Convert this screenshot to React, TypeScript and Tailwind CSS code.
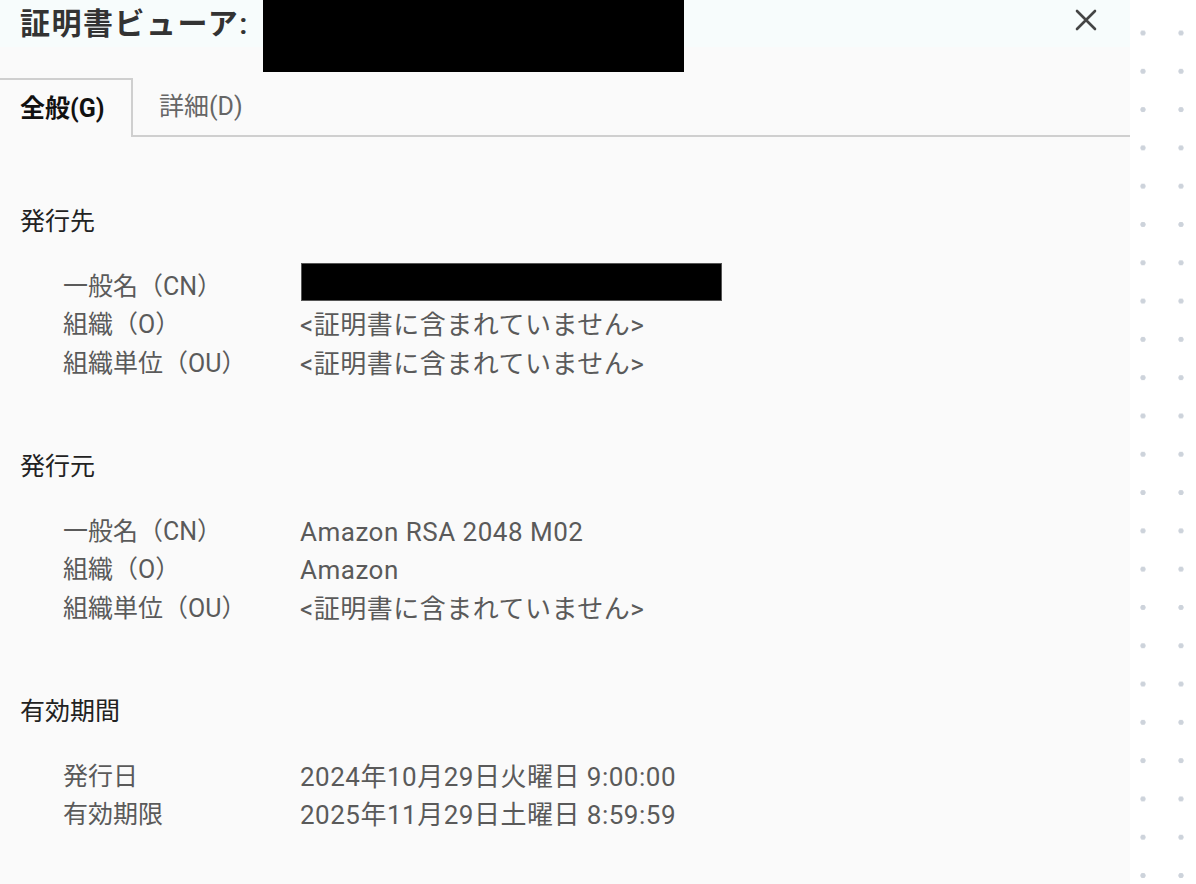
type Row = { label: string; value: string; redacted?: boolean };
type Section = { title: string; rows: Row[] };

const NOT_INCLUDED = '<証明書に含まれていません>';

const sections: Section[] = [
  {
    title: '発行先',
    rows: [
      { label: '一般名（CN）', value: '', redacted: true },
      { label: '組織（O）', value: NOT_INCLUDED },
      { label: '組織単位（OU）', value: NOT_INCLUDED },
    ],
  },
  {
    title: '発行元',
    rows: [
      { label: '一般名（CN）', value: 'Amazon RSA 2048 M02' },
      { label: '組織（O）', value: 'Amazon' },
      { label: '組織単位（OU）', value: NOT_INCLUDED },
    ],
  },
  {
    title: '有効期間',
    rows: [
      { label: '発行日', value: '2024年10月29日火曜日 9:00:00' },
      { label: '有効期限', value: '2025年11月29日土曜日 8:59:59' },
    ],
  },
];

export default function App() {
  return (
    <div className="flex h-[884px] w-[1196px] overflow-hidden bg-white font-['Roboto','Noto_Sans_CJK_JP',sans-serif]">
      {/* Dialog */}
      <div className="relative w-[1130px] shrink-0 bg-[#fafafa]">
        <div className="flex h-[47px] items-center justify-between bg-[#f7fcfc] pl-5 pr-[33px]">
          <h1 className="text-[30px] font-semibold leading-none tracking-[1.5px] text-[#333]">証明書ビューア:</h1>
          <button className="-translate-y-[4px] text-[#454545]">
            <svg width="22" height="22" viewBox="0 0 22 22" fill="none" stroke="currentColor" strokeWidth="2.6" strokeLinecap="round">
              <path d="M2 2 20 20M20 2 2 20" />
            </svg>
          </button>
        </div>

        {/* redacted title */}
        <div className="absolute left-[263px] top-0 h-[72px] w-[421px] bg-black" />

        {/* Tabs */}
        <div className="mt-[31px] flex h-[59px] border-b-2 border-[#cfcfcf]">
          <div className="-mb-[2px] flex h-[59px] w-[133px] items-center border-r-2 border-t-2 border-[#cfcfcf] bg-[#fafafa] pl-5 text-[25px] font-bold text-[#111]">
            全般(G)
          </div>
          <div className="flex items-center pl-[26px] text-[25px] text-[#666]">詳細(D)</div>
        </div>

        {/* Content */}
        <div className="flex flex-col gap-[65px] px-5 pt-[66px] text-[25px] leading-[38.5px]">
          {sections.map(section => (
            <div key={section.title}>
              <h2 className="mb-[26px] text-[#222]">{section.title}</h2>
              <div className="grid grid-cols-[237px_1fr] pl-[43px] text-[#5a5a5a]">
                {section.rows.map(row => (
                  <div key={row.label} className="contents">
                    <span>{row.label}</span>
                    {row.redacted ? (
                      <span className="flex items-start">
                        <span className="-mt-[5px] ml-px h-[38px] w-[421px] border border-[#555] bg-black" />
                      </span>
                    ) : (
                      <span className="text-[26px] tracking-[0.5px]">{row.value}</span>
                    )}
                  </div>
                ))}
              </div>
            </div>
          ))}
        </div>
      </div>

      {/* dotted canvas strip */}
      <div className="flex-1 bg-white bg-[radial-gradient(circle,#cdd3db_2.3px,transparent_3px)] bg-size-[38px_38.3px] bg-position-[-6px_13.85px]" />
    </div>
  );
}
